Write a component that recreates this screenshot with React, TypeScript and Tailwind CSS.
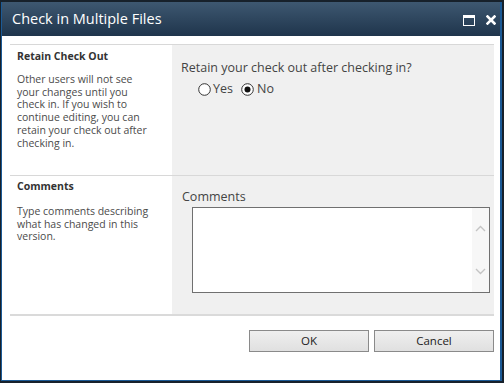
import React from "react";

const font = { fontFamily: '"Open Sans", "Noto Sans", "Liberation Sans", sans-serif' };

function Radio({ checked }: { checked?: boolean }) {
  return (
    <svg width="13" height="13" viewBox="0 0 13 13">
      <circle cx="6.5" cy="6.5" r="5.8" fill="#fff" stroke="#333" strokeWidth="1" />
      {checked && <circle cx="6.5" cy="6.5" r="3" fill="#111" />}
    </svg>
  );
}

export default function App() {
  return (
    <div className="w-[504px] h-[383px] bg-[#17212b] border-t-2 border-l border-r-2 border-b-2 border-[#17212b]" style={font}>
      <div className="flex h-full flex-col border-l border-r-2 border-b border-[#1b5a96] bg-white">
        <div className="flex h-[34px] shrink-0 items-center justify-between bg-gradient-to-b from-[#3e5871] to-[#1f354c] pl-[10px] pr-[4px]">
          <span className="text-[14.5px] leading-none text-white">Check in Multiple Files</span>
          <div className="flex items-center gap-[11px] pt-[2px]">
            <svg width="12" height="11" viewBox="0 0 12 11">
              <rect x="0.5" y="0.5" width="11" height="10" fill="none" stroke="#fff" strokeWidth="1" />
              <rect x="0.5" y="0.5" width="11" height="2.5" fill="#fff" />
            </svg>
            <svg width="10" height="10" viewBox="0 0 10 10">
              <path d="M1.5 1.5 L8.5 8.5 M8.5 1.5 L1.5 8.5" stroke="#fff" strokeWidth="2.6" strokeLinecap="square" />
            </svg>
          </div>
        </div>
        <div className="flex flex-1 flex-col pl-[8px] pr-[6px] pt-[8px]">
          <div className="h-px bg-[#d8d8d8]" />
          <div className="flex h-[130px]">
            <div className="w-[162px] shrink-0 pl-[7px] pr-[22px] pt-[5px] text-[10.5px] leading-[12.8px] text-[#4b4b4b]">
              <div className="font-bold text-[#333]">Retain Check Out</div>
              <div className="mt-[10px]">
                Other users will not see your changes until you check in. If you wish to continue editing, you can retain your check out after checking in.
              </div>
            </div>
            <div className="flex-1 bg-[#f0f0f0] pl-[9px] pt-[15px] text-[12.5px] leading-[16px] text-[#444]">
              <div>Retain your check out after checking in?</div>
              <div className="mt-[5px] flex items-center pl-[17px]">
                <Radio />
                <span className="ml-[2px] mr-[8px]">Yes</span>
                <Radio checked />
                <span className="ml-[3px]">No</span>
              </div>
            </div>
          </div>
          <div className="h-px bg-[#d8d8d8]" />
          <div className="flex h-[138px]">
            <div className="w-[162px] shrink-0 pl-[7px] pr-[22px] pt-[4px] text-[10.5px] leading-[12.8px] text-[#4b4b4b]">
              <div className="font-bold text-[#333]">Comments</div>
              <div className="mt-[12px]">Type comments describing what has changed in this version.</div>
            </div>
            <div className="flex-1 bg-[#f0f0f0] pl-[10px] pt-[13px] text-[12.5px] leading-[16px] text-[#444]">
              <div>Comments</div>
              <div className="ml-[10px] mt-[2px] flex h-[86px] w-[298px] border border-[#707070] bg-white">
                <div className="flex-1" />
                <div className="flex w-[17px] flex-col items-center justify-between bg-[#f7f7f7] py-[17px]">
                  <svg width="11" height="7" viewBox="0 0 11 7">
                    <path d="M1 6 L5.5 1.5 L10 6" fill="none" stroke="#c4c4c4" strokeWidth="1.4" />
                  </svg>
                  <svg width="11" height="7" viewBox="0 0 11 7">
                    <path d="M1 1 L5.5 5.5 L10 1" fill="none" stroke="#c4c4c4" strokeWidth="1.4" />
                  </svg>
                </div>
              </div>
            </div>
          </div>
          <div className="h-[2px] bg-[#dadada]" />
          <div className="flex justify-end gap-[5px] pt-[14px]">
            <button className="h-[22px] w-[120px] border border-[#8a8a8a] bg-gradient-to-b from-[#efefef] to-[#e0e0e0] text-[11.5px] text-[#222]">OK</button>
            <button className="h-[22px] w-[120px] border border-[#8a8a8a] bg-gradient-to-b from-[#efefef] to-[#e0e0e0] text-[11.5px] text-[#222]">Cancel</button>
          </div>
        </div>
      </div>
    </div>
  );
}
